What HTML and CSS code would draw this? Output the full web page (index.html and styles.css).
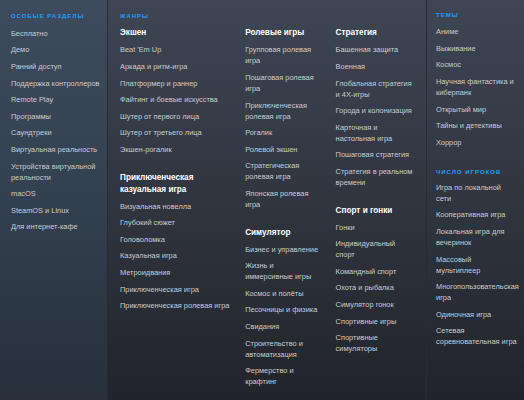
FILE: index.html
```html
<!DOCTYPE html>
<html lang="ru">
<head>
    <meta charset="UTF-8">
    <meta name="viewport" content="width=device-width, initial-scale=1.0">
    <title>Категории</title>
    <link rel="stylesheet" href="styles.css">
</head>
<body>
    <div class="menu">
        <div class="col special">
            <div class="section-title">Особые разделы</div>
            <a class="item" href="#">Бесплатно</a>
            <a class="item" href="#">Демо</a>
            <a class="item" href="#">Ранний доступ</a>
            <a class="item" href="#">Поддержка контроллеров</a>
            <a class="item" href="#">Remote Play</a>
            <a class="item" href="#">Программы</a>
            <a class="item" href="#">Саундтреки</a>
            <a class="item" href="#">Виртуальная реальность</a>
            <a class="item" href="#">Устройства виртуальной реальности</a>
            <a class="item" href="#">macOS</a>
            <a class="item" href="#">SteamOS и Linux</a>
            <a class="item" href="#">Для интернет-кафе</a>
        </div>

        <div class="col genres">
            <div class="section-title">Жанры</div>
            <div class="genre-grid">
                <div class="sub sub-wide">
                    <a class="item head" href="#">Экшен</a>
                    <a class="item" href="#">Beat 'Em Up</a>
                    <a class="item" href="#">Аркада и ритм-игра</a>
                    <a class="item" href="#">Платформер и раннер</a>
                    <a class="item" href="#">Файтинг и боевые искусства</a>
                    <a class="item" href="#">Шутер от первого лица</a>
                    <a class="item" href="#">Шутер от третьего лица</a>
                    <a class="item" href="#">Экшен-рогалик</a>
                    <a class="item head group" href="#">Приключенческая<br>казуальная игра</a>
                    <a class="item" href="#">Визуальная новелла</a>
                    <a class="item" href="#">Глубокий сюжет</a>
                    <a class="item" href="#">Головоломка</a>
                    <a class="item" href="#">Казуальная игра</a>
                    <a class="item" href="#">Метроидвания</a>
                    <a class="item" href="#">Приключенческая игра</a>
                    <a class="item" href="#">Приключенческая ролевая игра</a>
                </div>
                <div class="sub sub-narrow">
                    <a class="item head" href="#">Ролевые игры</a>
                    <a class="item" href="#">Групповая ролевая игра</a>
                    <a class="item" href="#">Пошаговая ролевая игра</a>
                    <a class="item" href="#">Приключенческая ролевая игра</a>
                    <a class="item" href="#">Рогалик</a>
                    <a class="item" href="#">Ролевой экшен</a>
                    <a class="item" href="#">Стратегическая ролевая игра</a>
                    <a class="item" href="#">Японская ролевая игра</a>
                    <a class="item head group" href="#">Симулятор</a>
                    <a class="item" href="#">Бизнес и управление</a>
                    <a class="item" href="#">Жизнь и иммерсивные игры</a>
                    <a class="item" href="#">Космос и полёты</a>
                    <a class="item" href="#">Песочницы и физика</a>
                    <a class="item" href="#">Свидания</a>
                    <a class="item" href="#">Строительство и автоматизация</a>
                    <a class="item" href="#">Фермерство и крафтинг</a>
                </div>
                <div class="sub">
                    <a class="item head" href="#">Стратегия</a>
                    <a class="item" href="#">Башенная защита</a>
                    <a class="item" href="#">Военная</a>
                    <a class="item" href="#">Глобальная стратегия и 4X-игры</a>
                    <a class="item" href="#">Города и колонизация</a>
                    <a class="item" href="#">Карточная и настольная игра</a>
                    <a class="item" href="#">Пошаговая стратегия</a>
                    <a class="item" href="#">Стратегия в реальном времени</a>
                    <a class="item head group" href="#">Спорт и гонки</a>
                    <a class="item" href="#">Гонки</a>
                    <a class="item" href="#">Индивидуальный спорт</a>
                    <a class="item" href="#">Командный спорт</a>
                    <a class="item" href="#">Охота и рыбалка</a>
                    <a class="item" href="#">Симулятор гонок</a>
                    <a class="item" href="#">Спортивные игры</a>
                    <a class="item" href="#">Спортивные симуляторы</a>
                </div>
            </div>
        </div>

        <div class="col themes">
            <div class="section-title">Темы</div>
            <a class="item" href="#">Аниме</a>
            <a class="item" href="#">Выживание</a>
            <a class="item" href="#">Космос</a>
            <a class="item" href="#">Научная фантастика и киберпанк</a>
            <a class="item" href="#">Открытый мир</a>
            <a class="item" href="#">Тайны и детективы</a>
            <a class="item" href="#">Хоррор</a>
            <div class="section-title group-title">Число игроков</div>
            <a class="item" href="#">Игра по локальной<br>сети</a>
            <a class="item" href="#">Кооперативная игра</a>
            <a class="item" href="#">Локальная игра для вечеринок</a>
            <a class="item" href="#">Массовый<br>мультиплеер</a>
            <a class="item" href="#">Многопользовательская игра</a>
            <a class="item" href="#">Одиночная игра</a>
            <a class="item" href="#">Сетевая соревновательная игра</a>
        </div>
    </div>
</body>
</html>
```

FILE: styles.css
```css
body {
    margin: 0;
    background-color: #22252b;
    font-family: "Liberation Sans", Arial, sans-serif;
}
.menu {
    display: flex;
    width: 524px;
    height: 400px;
    background: linear-gradient(to bottom, #3e4654 0%, #30353f 50%, #21242a 100%);
    overflow: hidden;
}
.col {
    display: flex;
    flex-direction: column;
    align-items: flex-start;
    box-sizing: border-box;
    padding-top: 12px;
}
.special {
    width: 108px;
    padding-left: 11px;
    padding-right: 6px;
    background: linear-gradient(to bottom, #3d4b5c 0%, #33404f 50%, #27303b 100%);
    border-right: 1px solid #262c34;
}
.genres {
    width: 319px;
    padding-left: 12px;
    border-right: 1px solid #262c34;
}
.themes {
    width: 97px;
    padding-left: 9px;
    padding-right: 5px;
    padding-top: 10.5px;
}
.section-title {
    font-size: 6px;
    line-height: 8px;
    font-weight: bold;
    text-transform: uppercase;
    letter-spacing: 1px;
    color: #1a9fff;
    margin-bottom: 5px;
}
.group-title {
    margin-top: 17px;
    margin-bottom: 3.3px;
}
.item {
    display: block;
    font-size: 7.4px;
    line-height: 11px;
    padding: 2.8px 0;
    color: #c9ccd1;
    text-decoration: none;
}
.item:hover {
    color: #ffffff;
}
.head {
    font-size: 8.2px;
    line-height: 12px;
    padding: 2.3px 0;
    font-weight: bold;
    color: #ffffff;
}
.group {
    margin-top: 11.5px;
}
.genre-grid {
    display: flex;
    width: 100%;
}
.sub {
    display: flex;
    flex-direction: column;
    width: 91px;
    padding-right: 10px;
    box-sizing: border-box;
}
.sub-wide {
    width: 126px;
}
.sub-narrow {
    padding-right: 15px;
}
```
